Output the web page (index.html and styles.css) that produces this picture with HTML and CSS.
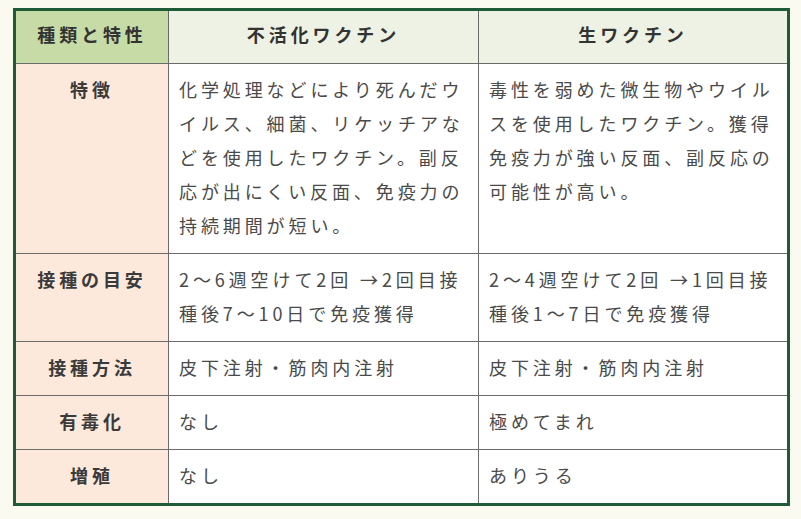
FILE: index.html
```html
<!DOCTYPE html>
<html lang="ja">
<head>
<meta charset="utf-8">
<link rel="stylesheet" href="styles.css">
</head>
<body>
<table class="vtable">
  <colgroup>
    <col class="c1">
    <col class="c2">
    <col class="c3">
  </colgroup>
  <thead>
    <tr>
      <th class="h-first">種類と特性</th>
      <th class="h-col">不活化ワクチン</th>
      <th class="h-col">生ワクチン</th>
    </tr>
  </thead>
  <tbody>
    <tr>
      <th class="label">特徴</th>
      <td>化学処理などにより死んだウイルス、細菌、リケッチアなどを使用したワクチン。副反応が出にくい反面、免疫力の持続期間が短い。</td>
      <td>毒性を弱めた微生物やウイルスを使用したワクチン。獲得免疫力が強い反面、副反応の可能性が高い。</td>
    </tr>
    <tr>
      <th class="label">接種の目安</th>
      <td>2～6週空けて2回 →2回目接種後7～10日で免疫獲得</td>
      <td>2～4週空けて2回 →1回目接種後1～7日で免疫獲得</td>
    </tr>
    <tr>
      <th class="label">接種方法</th>
      <td>皮下注射・筋肉内注射</td>
      <td>皮下注射・筋肉内注射</td>
    </tr>
    <tr>
      <th class="label">有毒化</th>
      <td>なし</td>
      <td>極めてまれ</td>
    </tr>
    <tr>
      <th class="label">増殖</th>
      <td>なし</td>
      <td>ありうる</td>
    </tr>
  </tbody>
</table>
</body>
</html>
```

FILE: styles.css
```css
html, body {
  margin: 0;
  padding: 0;
}
body {
  background: #fafaf0;
  font-family: "Noto Sans CJK JP", "Noto Sans", sans-serif;
  padding: 8px 0 0 13px;
}
.vtable {
  border-collapse: collapse;
  table-layout: fixed;
  width: 774px;
  border: 3px solid #1f5b36;
}
.c1 { width: 154px; }
.c2 { width: 310px; }
.c3 { width: 310px; }
.vtable th,
.vtable td {
  border: 1px solid #6b6b6b;
  font-size: 18px;
  line-height: 34px;
  letter-spacing: 3.9px;
  vertical-align: top;
}
.vtable thead th {
  height: 34px;
  padding: 6px 8px 12px;
  font-weight: 700;
  color: #333;
  text-align: center;
}
.h-first {
  background: #c6dba5;
}
.h-col {
  background: #eef2e4;
}
.label {
  background: #fde9dc;
  color: #3a3a3a;
  font-weight: 700;
  text-align: center;
  padding: 8px 6px 11px;
}
.vtable td {
  background: #fff;
  color: #4a4a4a;
  font-weight: 400;
  padding: 8px 10px 11px;
  text-align: left;
}
.vtable tr > *:last-child {
  border-right: 3px solid #1f5b36;
}
.vtable tbody tr:last-child > * {
  border-bottom: 3px solid #1f5b36;
}
.vtable thead th {
  border-top: 3px solid #1f5b36;
}
.vtable tr > *:first-child {
  border-left: 3px solid #1f5b36;
}
```
